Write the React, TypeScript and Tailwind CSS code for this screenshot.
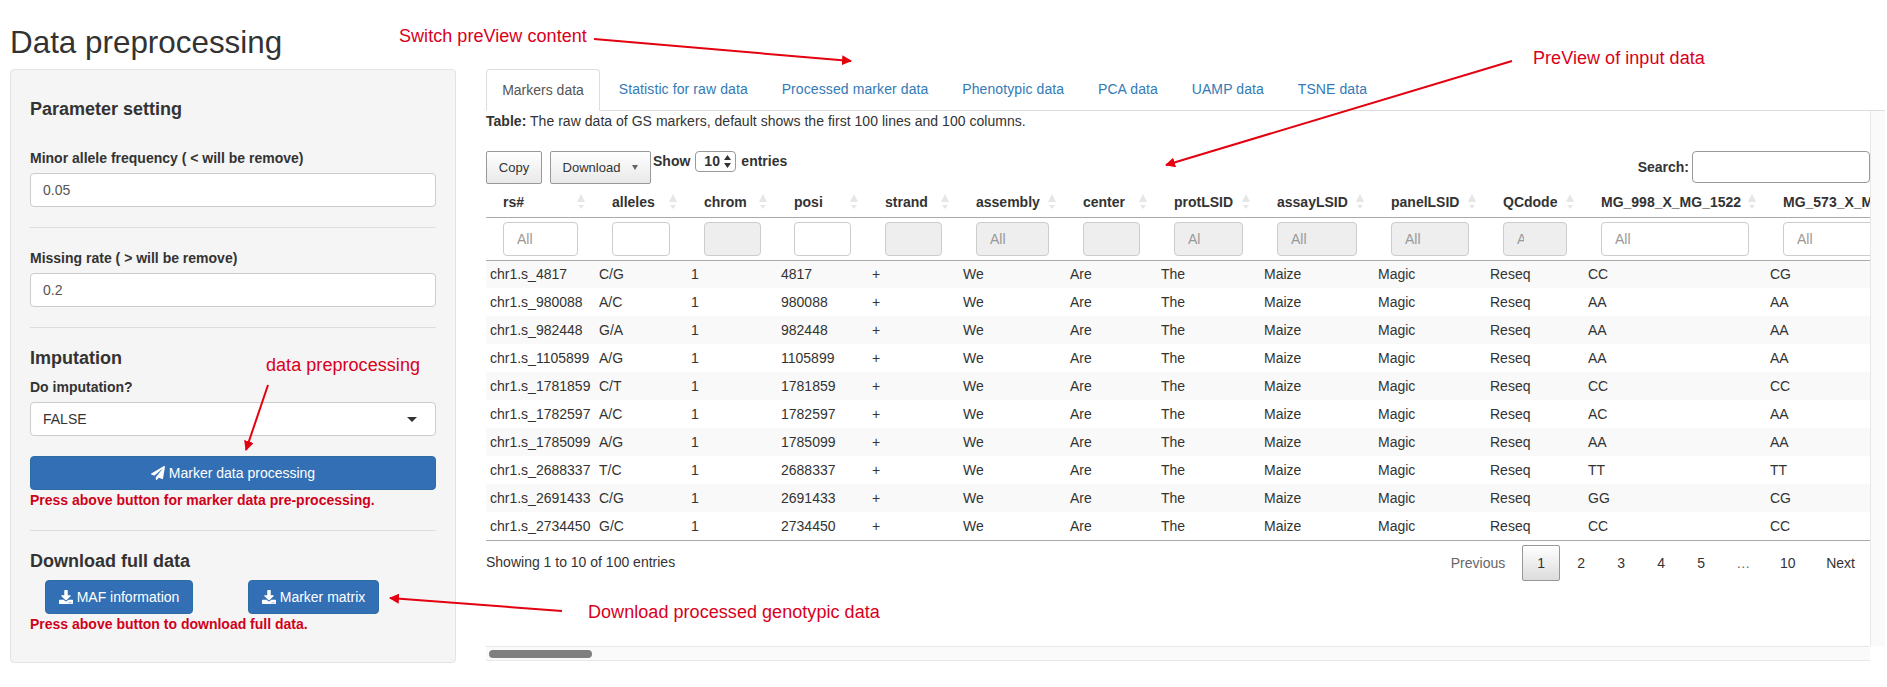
import React from "react";
import { FaDownload, FaPaperPlane } from "react-icons/fa";

const columns = [
  { name: "rs#", width: 109, hint: "All", off: false },
  { name: "alleles", width: 92, hint: "", off: false },
  { name: "chrom", width: 90, hint: "", off: true },
  { name: "posi", width: 91, hint: "", off: false },
  { name: "strand", width: 91, hint: "", off: true },
  { name: "assembly", width: 107, hint: "All", off: true },
  { name: "center", width: 91, hint: "", off: true },
  { name: "protLSID", width: 103, hint: "All", off: true },
  { name: "assayLSID", width: 114, hint: "All", off: true },
  { name: "panelLSID", width: 112, hint: "All", off: true },
  { name: "QCdode", width: 98, hint: "All", off: true },
  { name: "MG_998_X_MG_1522", width: 182, hint: "All", off: false },
  { name: "MG_573_X_MG_1522", width: 184, hint: "All", off: false },
];

const rows = [
  ["chr1.s_4817", "C/G", "4817", "CC", "CG"],
  ["chr1.s_980088", "A/C", "980088", "AA", "AA"],
  ["chr1.s_982448", "G/A", "982448", "AA", "AA"],
  ["chr1.s_1105899", "A/G", "1105899", "AA", "AA"],
  ["chr1.s_1781859", "C/T", "1781859", "CC", "CC"],
  ["chr1.s_1782597", "A/C", "1782597", "AC", "AA"],
  ["chr1.s_1785099", "A/G", "1785099", "AA", "AA"],
  ["chr1.s_2688337", "T/C", "2688337", "TT", "TT"],
  ["chr1.s_2691433", "C/G", "2691433", "GG", "CG"],
  ["chr1.s_2734450", "G/C", "2734450", "CC", "CC"],
];

const tabs = ["Statistic for raw data", "Processed marker data", "Phenotypic data", "PCA data", "UAMP data", "TSNE data"];
const pages = ["2", "3", "4", "5"];

const SortIcon = () => (
  <svg width="10" height="16" viewBox="0 0 10 16" className="shrink-0">
    <path d="M5 0 L9 8 H1 Z" fill="#e6e6e6" />
    <path d="M2 11 H8 L5 15 Z" fill="#e6e6e6" />
  </svg>
);

const Field = ({ label, value }: { label: string; value: string }) => (
  <div>
    <label className="block font-bold mb-[5px] h-5 leading-5">{label}</label>
    <input
      readOnly
      value={value}
      className="block w-full h-[34px] px-3 bg-white border border-[#ccc] rounded text-[#555] outline-none"
    />
  </div>
);

const Hr = () => <hr className="border-0 border-t border-[#ddd] my-5" />;

const Sidebar = () => (
  <div className="w-[446px] h-[594px] ml-[10px] bg-[#f5f5f5] border border-[#e3e3e3] rounded px-[19px] pt-[29px]">
    <h3 className="text-[18px] font-bold leading-5 mb-[29px]">Parameter setting</h3>
    <Field label="Minor allele frequency ( < will be remove)" value="0.05" />
    <Hr />
    <Field label="Missing rate ( > will be remove)" value="0.2" />
    <Hr />
    <h3 className="text-[18px] font-bold leading-5 mb-[9px]">Imputation</h3>
    <label className="block font-bold h-5 leading-5 mb-[5px]">Do imputation?</label>
    <div className="flex items-center justify-between h-[34px] pl-3 pr-[18px] bg-white border border-[#ccc] rounded">
      FALSE
      <span className="w-0 h-0 border-x-[5px] border-x-transparent border-t-[5px] border-t-[#333]" />
    </div>
    <button className="flex items-center justify-center gap-1 w-full h-[34px] mt-5 bg-[#336fb4] border border-[#2e6da4] rounded text-white">
      <FaPaperPlane className="text-[14px]" /> Marker data processing
    </button>
    <p className="text-[#d0021b] font-bold h-5 leading-5">Press above button for marker data pre-processing.</p>
    <Hr />
    <h3 className="text-[18px] font-bold leading-5 mb-[9px]">Download full data</h3>
    <div className="flex pl-[15px] gap-[55px]">
      <button className="flex items-center justify-center gap-1 w-[148px] h-[34px] bg-[#336fb4] border border-[#2e6da4] rounded text-white">
        <FaDownload className="text-[14px]" /> MAF information
      </button>
      <button className="flex items-center justify-center gap-1 w-[131px] h-[34px] bg-[#336fb4] border border-[#2e6da4] rounded text-white">
        <FaDownload className="text-[14px]" /> Marker matrix
      </button>
    </div>
    <p className="text-[#d0021b] font-bold h-5 leading-5">Press above button to download full data.</p>
  </div>
);

const Toolbar = () => (
  <div className="flex justify-between items-start h-[36px] mt-5">
    <div className="flex items-start">
      <button className="w-[56px] h-[33px] mr-2 bg-linear-to-b from-white to-[#e9e9e9] border border-[#999] rounded-[2px] text-[13px]">
        Copy
      </button>
      <button className="flex items-center justify-center gap-3 w-[101px] h-[33px] mr-[2px] bg-linear-to-b from-white to-[#e9e9e9] border border-[#999] rounded-[2px] text-[13px]">
        Download
        <span className="w-0 h-0 border-x-[3px] border-x-transparent border-t-[5px] border-t-[#666]" />
      </button>
      <div className="flex items-center h-[21px] font-bold">
        <span>Show</span>
        <div className="flex items-center justify-between w-[41px] h-[21px] mx-[5px] pl-2 pr-[4px] border border-[#999] rounded">
          10
          <svg width="7" height="13" viewBox="0 0 7 13">
            <path d="M3.5 0 L7 5 H0 Z M0 8 H7 L3.5 13 Z" fill="#333" />
          </svg>
        </div>
        <span>entries</span>
      </div>
    </div>
    <div className="flex items-center font-bold">
      <span className="mr-[3px]">Search:</span>
      <input readOnly className="w-[178px] h-[32px] bg-white border border-[#999] rounded outline-none" />
    </div>
  </div>
);

const DataTable = () => (
  <div className="overflow-hidden">
    <table className="table-fixed border-collapse w-[1464px]">
      <colgroup>
        {columns.map((c) => (
          <col key={c.name} style={{ width: c.width }} />
        ))}
      </colgroup>
      <thead>
        <tr className="h-[30px]">
          {columns.map((c) => (
            <th key={c.name} className="pl-[17px] pr-[9px] pt-[1px] font-bold text-left whitespace-nowrap">
              <div className="flex items-center justify-between">
                {c.name}
                <SortIcon />
              </div>
            </th>
          ))}
        </tr>
        <tr className="h-[43px] border-y border-[#aaa]">
          {columns.map((c) => (
            <td key={c.name} className="px-[17px]">
              <input
                readOnly
                placeholder={c.hint}
                className={`block w-full h-[34px] pl-[13px] pr-[42px] border border-[#ccc] rounded outline-none placeholder:text-[#999] ${
                  c.off ? "bg-[#eee]" : "bg-white"
                }`}
              />
            </td>
          ))}
        </tr>
      </thead>
      <tbody>
        {rows.map((r, i) => (
          <tr key={r[0]} className={`h-7 ${i % 2 === 0 ? "bg-[#f9f9f9]" : "bg-white"}`}>
            {[r[0], r[1], "1", r[2], "+", "We", "Are", "The", "Maize", "Magic", "Reseq", r[3], r[4]].map((v, j) => (
              <td key={j} className="pl-1 whitespace-nowrap">
                {v}
              </td>
            ))}
          </tr>
        ))}
      </tbody>
    </table>
    <div className="border-t border-[#aaa]" />
  </div>
);

const TableFooter = () => (
  <div className="flex justify-between items-start mt-1">
    <span className="mt-[7px]">Showing 1 to 10 of 100 entries</span>
    <div className="flex items-center h-[36px]">
      <span className="px-[15px] text-[#666]">Previous</span>
      <span className="w-[38px] h-[36px] ml-[2px] flex items-center justify-center bg-linear-to-b from-white to-[#dcdcdc] border border-[#979797] rounded-[2px]">
        1
      </span>
      {pages.map((p) => (
        <span key={p} className="w-[38px] ml-[2px] text-center">
          {p}
        </span>
      ))}
      <span className="w-[42px] ml-[2px] text-center text-[#666]">…</span>
      <span className="w-[43px] ml-[2px] text-center">10</span>
      <span className="px-[15px] ml-[2px]">Next</span>
    </div>
  </div>
);

const Arrows = () => (
  <svg width="1887" height="687" className="absolute left-0 top-0 pointer-events-none">
    <defs>
      <marker id="head" markerWidth="5" markerHeight="5" refX="4.5" refY="2.5" orient="auto">
        <path d="M0 0 L5 2.5 L0 5 Z" fill="#e3000f" />
      </marker>
    </defs>
    <g stroke="#e3000f" strokeWidth="2">
      <line x1="594" y1="39" x2="851" y2="61" markerEnd="url(#head)" />
      <line x1="1512" y1="61" x2="1166" y2="165" markerEnd="url(#head)" />
      <line x1="268" y1="385" x2="246" y2="450" markerEnd="url(#head)" />
      <line x1="562" y1="611" x2="390" y2="598" markerEnd="url(#head)" />
    </g>
  </svg>
);

const Note = ({ className, children }: { className: string; children: string }) => (
  <span className={`absolute text-[18px] tracking-[0.05px] leading-6 text-[#d8001c] whitespace-nowrap ${className}`}>{children}</span>
);

export default function App() {
  return (
    <div className="relative flex w-[1887px] h-[687px] overflow-hidden bg-white text-[14px] text-[#333] font-['Liberation_Sans',Arial,sans-serif]">
      <div className="w-[486px] shrink-0">
        <h2 className="text-[31.4px] leading-[33px] mt-[26px] mb-[10px] ml-[10px]">Data preprocessing</h2>
        <Sidebar />
      </div>
      <div className="w-[1399px] pt-[69px]">
        <div className="flex h-[42px] border-b border-[#ddd]">
          <div className="flex items-center justify-center w-[114px] h-[42px] bg-white border border-[#ddd] border-b-white rounded-t text-[#555]">
            Markers data
          </div>
          {tabs.map((t) => (
            <div key={t} className="flex items-center ml-[3.8px] px-[15px] h-[41px] tracking-[0.1px] text-[#337ab7]">
              {t}
            </div>
          ))}
        </div>
        <div className="flex h-[535px]">
          <div className="w-[1384px]">
            <p className="leading-5 tracking-[0.03px]">
              <b>Table:</b> The raw data of GS markers, default shows the first 100 lines and 100 columns.
            </p>
            <Toolbar />
            <DataTable />
            <TableFooter />
          </div>
          <div className="w-[15px] bg-[#fafafa] border-l border-[#e8e8e8]" />
        </div>
        <div className="w-[1384px] h-[15px] pt-[3px] pl-[3px] bg-[#fafafa] border-y border-[#e8e8e8]">
          <div className="w-[103px] h-[8px] bg-[#7f7f7f] rounded-full" />
        </div>
      </div>
      <Arrows />
      <Note className="left-[399px] top-[24px]">Switch preView content</Note>
      <Note className="left-[1533px] top-[46px]">PreView of input data</Note>
      <Note className="left-[266px] top-[353px]">data preprocessing</Note>
      <Note className="left-[588px] top-[600px]">Download processed genotypic data</Note>
    </div>
  );
}
